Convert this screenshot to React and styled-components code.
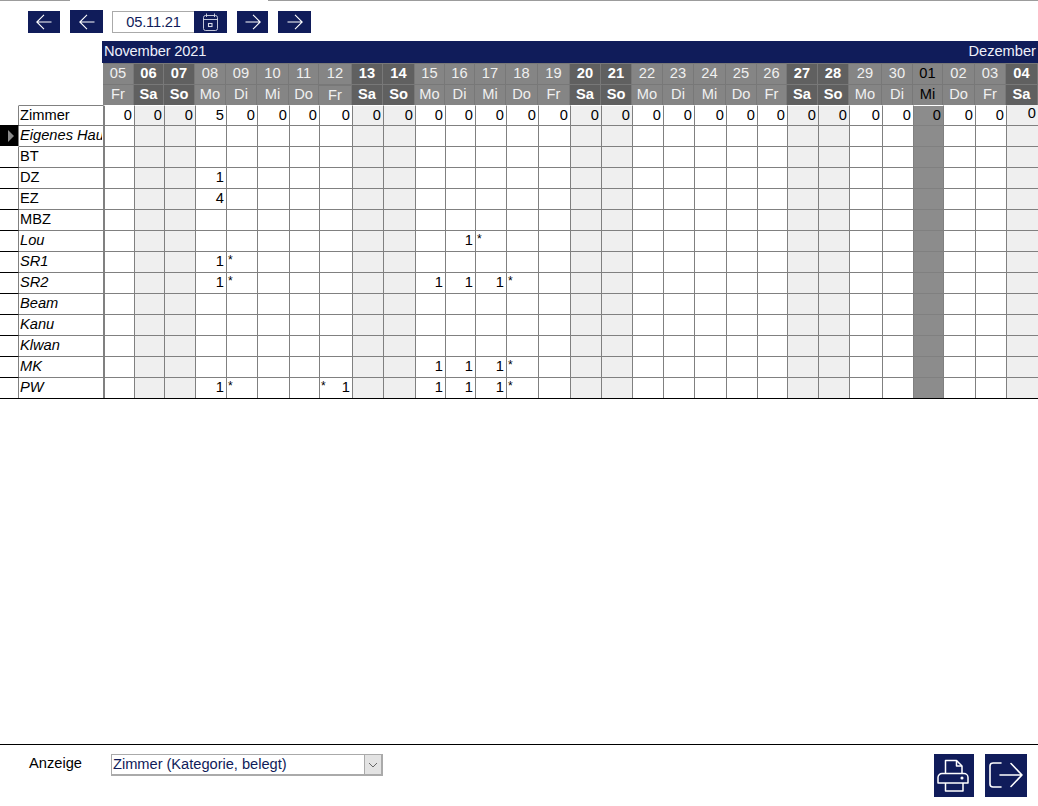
import React from 'react';
import styled, { createGlobalStyle } from 'styled-components';

const NAVY = '#101c5a';
const LINE = '#808080';

// x positions of the day columns, the sheet is not evenly divided
const EDGES = [103, 134, 164, 195, 226, 257, 289, 319, 352, 383, 415, 445, 475, 506, 538, 570, 601, 632, 663, 694, 726, 757, 787, 818, 849, 882, 913, 943, 975, 1006, 1038];
const COLUMNS = EDGES.slice(1).map((x, i) => `${x - EDGES[i]}px`).join(' ');

const DAYS = [
  ['05', 'Fr'], ['06', 'Sa'], ['07', 'So'], ['08', 'Mo'], ['09', 'Di'], ['10', 'Mi'], ['11', 'Do'], ['12', 'Fr'],
  ['13', 'Sa'], ['14', 'So'], ['15', 'Mo'], ['16', 'Di'], ['17', 'Mi'], ['18', 'Do'], ['19', 'Fr'], ['20', 'Sa'],
  ['21', 'So'], ['22', 'Mo'], ['23', 'Di'], ['24', 'Mi'], ['25', 'Do'], ['26', 'Fr'], ['27', 'Sa'], ['28', 'So'],
  ['29', 'Mo'], ['30', 'Di'], ['01', 'Mi'], ['02', 'Do'], ['03', 'Fr'], ['04', 'Sa'],
];
const TODAY = 26;
const NUDGED_DAY = 7;
const isWeekend = (i) => DAYS[i][1] === 'Sa' || DAYS[i][1] === 'So';

const SUMMARY = ['0', '0', '0', '5', '0', '0', '0', '0', '0', '0', '0', '0', '0', '0', '0', '0', '0', '0', '0', '0', '0', '0', '0', '0', '0', '0', '0', '0', '0', '0'];

// values per column index, "*" sits left in the cell
const ROOMS = [
  { name: 'Eigenes Haus', italic: true, selected: true, values: {} },
  { name: 'BT', values: {} },
  { name: 'DZ', values: { 3: '1' } },
  { name: 'EZ', values: { 3: '4' } },
  { name: 'MBZ', values: {} },
  { name: 'Lou', italic: true, values: { 11: '1', 12: '*' } },
  { name: 'SR1', italic: true, values: { 3: '1', 4: '*' } },
  { name: 'SR2', italic: true, values: { 3: '1', 4: '*', 10: '1', 11: '1', 12: '1', 13: '*' } },
  { name: 'Beam', italic: true, values: {} },
  { name: 'Kanu', italic: true, values: {} },
  { name: 'Klwan', italic: true, values: {} },
  { name: 'MK', italic: true, values: { 10: '1', 11: '1', 12: '1', 13: '*' } },
  { name: 'PW', italic: true, values: { 3: '1', 4: '*', 7: '* 1', 10: '1', 11: '1', 12: '1', 13: '*' } },
];

const GlobalStyle = createGlobalStyle`
  html, body {
    margin: 0;
    padding: 0;
    background: #fff;
    overflow: hidden;
  }
  body {
    font-family: "Liberation Sans", Arial, sans-serif;
    font-size: 14.67px;
    color: #000;
  }
`;

const Page = styled.div`
  display: flex;
  flex-direction: column;
  width: 1038px;
  height: 806px;
`;

const TopRule = styled.div`
  display: flex;
  flex: 0 0 1px;
  gap: 198px;
`;

const TopRuleSegment = styled.div`
  flex: ${props => (props.$grow ? '1 1 auto' : '0 0 70px')};
  background: #9c9c9c;
`;

const Toolbar = styled.div`
  display: flex;
  flex: 0 0 40px;
  box-sizing: border-box;
  align-items: flex-end;
  gap: 10px;
  padding: 0 0 8px 28px;
`;

const NavButton = styled.button`
  display: flex;
  align-items: center;
  justify-content: center;
  width: ${props => props.$width}px;
  height: ${props => props.$height || 22}px;
  padding: 0;
  border: 0;
  background: ${NAVY};
`;

const DateField = styled.div`
  display: flex;
  height: 22px;
  margin-left: -1px;
`;

const DateValue = styled.div`
  width: 82px;
  box-sizing: border-box;
  border: 1px solid #aaa;
  border-right: 0;
  color: ${NAVY};
  letter-spacing: -0.2px;
  line-height: 20px;
  text-align: center;
`;

const CalendarButton = styled(NavButton)`
  width: 33px;
`;

const Sheet = styled.div`
  display: flex;
  flex-direction: column;
  border-bottom: 1px solid #000;
`;

const MonthBand = styled.div`
  display: flex;
  justify-content: space-between;
  height: 22px;
  margin-left: 102px;
  padding: 0 2px 0 2px;
  background: ${NAVY};
  color: #eef0fa;
  line-height: 21px;
`;

const MonthLabel = styled.span`
  letter-spacing: ${props => (props.$tight ? '-0.15px' : '0')};
`;

const DayHead = styled.div`
  margin-left: 103px;
  padding-top: 1px;
  background: #787878;
`;

const DayRow = styled.div`
  display: grid;
  grid-template-columns: ${COLUMNS};
  height: 20px;
  margin-bottom: 1px;
  &:last-child {
    margin-bottom: 0;
  }
`;

const DayCell = styled.div`
  margin-right: 1px;
  margin-top: ${props => (props.$nudged ? 1 : 0)}px;
  background: ${props => (props.$weekend ? '#606060' : '#858585')};
  color: ${props => {
    if (props.$today) return '#000';
    return props.$weekend ? '#fff' : '#f0f0f0';
  }};
  font-weight: ${props => (props.$weekend ? 'bold' : 'normal')};
  line-height: 19px;
  text-align: center;
`;

const Row = styled.div`
  display: grid;
  grid-template-columns: 19px 84px ${COLUMNS};
  height: ${props => (props.$summary ? 20 : 21)}px;
`;

const Gutter = styled.div`
  display: flex;
  align-items: center;
  box-sizing: border-box;
  padding-left: 8px;
  border-right: 1px solid ${LINE};
  border-top: 1px solid ${props => (props.$ruled ? '#000' : 'transparent')};
  background: ${props => (props.$selected ? '#000' : 'transparent')};
`;

const Marker = styled.span`
  width: 0;
  height: 0;
  border-top: 6px solid transparent;
  border-bottom: 6px solid transparent;
  border-left: 6px solid #8a8a8a;
`;

const RoomName = styled.div`
  box-sizing: border-box;
  overflow: hidden;
  padding: 0 1px;
  border-top: 1px solid ${LINE};
  font-style: ${props => (props.$italic ? 'italic' : 'normal')};
  line-height: 19px;
  white-space: nowrap;
`;

const ClipText = styled.span`
  display: block;
  overflow: hidden;
`;

const Cell = styled.div`
  box-sizing: border-box;
  padding-right: 2px;
  border-top: 1px solid ${props => (props.$summary ? 'transparent' : LINE)};
  border-left: ${props => (props.$first ? 2 : 1)}px solid ${LINE};
  background: ${props => {
    if (props.$today) return '#8c8c8c';
    return props.$weekend ? '#efefef' : '#fff';
  }};
  background-clip: ${props => (props.$summary && !props.$raised ? 'padding-box' : 'border-box')};
  line-height: ${props => (props.$raised ? 15 : 19)}px;
  text-align: right;
`;

const Star = styled.span`
  float: left;
  padding: 2px 0 0 1px;
  font-size: 12px;
  line-height: 13px;
`;

const Footer = styled.div`
  display: flex;
  flex: 0 0 62px;
  box-sizing: border-box;
  align-items: flex-start;
  margin-top: auto;
  padding: 9px 11px 0 29px;
  border-top: 1px solid #000;
`;

const FieldLabel = styled.div`
  width: 82px;
  line-height: 18px;
`;

const SelectBox = styled.div`
  display: flex;
  width: 272px;
  height: 22px;
  box-sizing: border-box;
  border: 1px solid #aaa;
  border-right-width: 2px;
  border-bottom-width: 2px;
  color: ${NAVY};
  letter-spacing: -0.03px;
  line-height: 19px;
`;

const SelectValue = styled.div`
  flex: 1 1 auto;
  padding-left: 1px;
`;

const SelectArrow = styled.div`
  display: flex;
  flex: 0 0 16px;
  align-items: center;
  justify-content: center;
  background: #e3e3e3;
  border-left: 1px solid #aaa;
`;

const FooterActions = styled.div`
  display: flex;
  gap: 11px;
  margin-left: auto;
`;

const ActionButton = styled(NavButton)`
  height: 43px;
`;

const ArrowIcon = ({ flip }) => (
  <svg width="16" height="16" viewBox="0 0 16 16" fill="none" stroke="#fff" strokeWidth="1.1">
    {flip
      ? <path d="M15.500 8H.5M8 .8 .8 8 8 15.200" />
      : <path d="M.5 8h15M8 .8 15.200 8 8 15.200" />}
  </svg>
);

const CalendarIcon = () => (
  <svg width="33" height="22" viewBox="0 0 33 22" fill="none" stroke="#d8dbe8" strokeWidth="0.9">
    <rect x="9.500" y="4.500" width="14" height="15" rx="2" />
    <path d="M9.500 8.500h14M12.500 2.500v3.500M20.500 2.500v3.500" />
    <rect x="14.500" y="12.500" width="3.500" height="3" strokeWidth="1.1" />
  </svg>
);

const PrintIcon = () => (
  <svg width="40" height="43" viewBox="0 0 40 43" fill="none" stroke="#fff" strokeWidth="1.5" strokeLinejoin="round">
    <path d="M11.500 19V6.500h11l5.500 5.500V19" />
    <path d="M22.500 6.500v5.500H28" />
    <path d="M8 19.500h22a4 4 0 0 1 4 4v5.500H4v-5.500a4 4 0 0 1 4-4z" />
    <path d="M11.500 29v8h17.500v-8" />
    <circle cx="28" cy="24" r=".8" fill="#fff" />
  </svg>
);

const ExitIcon = () => (
  <svg width="42" height="43" viewBox="0 0 42 43" fill="none" stroke="#fff" strokeWidth="1.6" strokeLinecap="round" strokeLinejoin="round">
    <path d="M16 9H8a3 3 0 0 0-3 3v18a3 3 0 0 0 3 3h8" />
    <path d="M15 21h22M26 9.500 37 21 26 32.500" />
  </svg>
);

const Chevron = () => (
  <svg width="10" height="6" viewBox="0 0 10 6" fill="none" stroke="#666" strokeWidth="1">
    <path d="M1 1l4 4 4-4" />
  </svg>
);

const RoomCell = ({ value, index }) => {
  const parts = (value || '').split(' ');
  const star = parts.includes('*');
  const number = parts.find(p => p && p !== '*');
  return (
    <Cell $first={index === 0} $weekend={isWeekend(index)} $today={index === TODAY}>
      {star ? <Star>*</Star> : null}
      {number}
    </Cell>
  );
};

export default function App() {
  return (
    <Page>
      <GlobalStyle />
      <TopRule>
        <TopRuleSegment />
        <TopRuleSegment $grow />
      </TopRule>

      <Toolbar>
        <NavButton $width={32}><ArrowIcon flip /></NavButton>
        <NavButton $width={33} $height={23}><ArrowIcon flip /></NavButton>
        <DateField>
          <DateValue>05.11.21</DateValue>
          <CalendarButton><CalendarIcon /></CalendarButton>
        </DateField>
        <NavButton $width={31}><ArrowIcon /></NavButton>
        <NavButton $width={33}><ArrowIcon /></NavButton>
      </Toolbar>

      <Sheet>
        <MonthBand>
          <MonthLabel $tight>November 2021</MonthLabel>
          <MonthLabel>Dezember</MonthLabel>
        </MonthBand>
        <DayHead>
          <DayRow>
            {DAYS.map(([day], i) => (
              <DayCell key={i} $weekend={isWeekend(i)} $today={i === TODAY}>{day}</DayCell>
            ))}
          </DayRow>
          <DayRow>
            {DAYS.map(([, name], i) => (
              <DayCell key={i} $weekend={isWeekend(i)} $today={i === TODAY} $nudged={i === NUDGED_DAY}>{name}</DayCell>
            ))}
          </DayRow>
        </DayHead>

        <Row $summary>
          <Gutter />
          <RoomName>Zimmer</RoomName>
          {SUMMARY.map((value, i) => (
            <Cell key={i} $summary $first={i === 0} $weekend={isWeekend(i)} $today={i === TODAY} $raised={i === 29}>
              {value}
            </Cell>
          ))}
        </Row>

        {ROOMS.map((room, r) => (
          <Row key={room.name}>
            <Gutter $selected={room.selected} $ruled={r > 1}>
              {room.selected ? <Marker /> : null}
            </Gutter>
            <RoomName $italic={room.italic}>
              <ClipText>{room.name}</ClipText>
            </RoomName>
            {DAYS.map((_, i) => <RoomCell key={i} index={i} value={room.values[i]} />)}
          </Row>
        ))}
      </Sheet>

      <Footer>
        <FieldLabel>Anzeige</FieldLabel>
        <SelectBox>
          <SelectValue>Zimmer (Kategorie, belegt)</SelectValue>
          <SelectArrow><Chevron /></SelectArrow>
        </SelectBox>
        <FooterActions>
          <ActionButton $width={40}><PrintIcon /></ActionButton>
          <ActionButton $width={42}><ExitIcon /></ActionButton>
        </FooterActions>
      </Footer>
    </Page>
  );
}
